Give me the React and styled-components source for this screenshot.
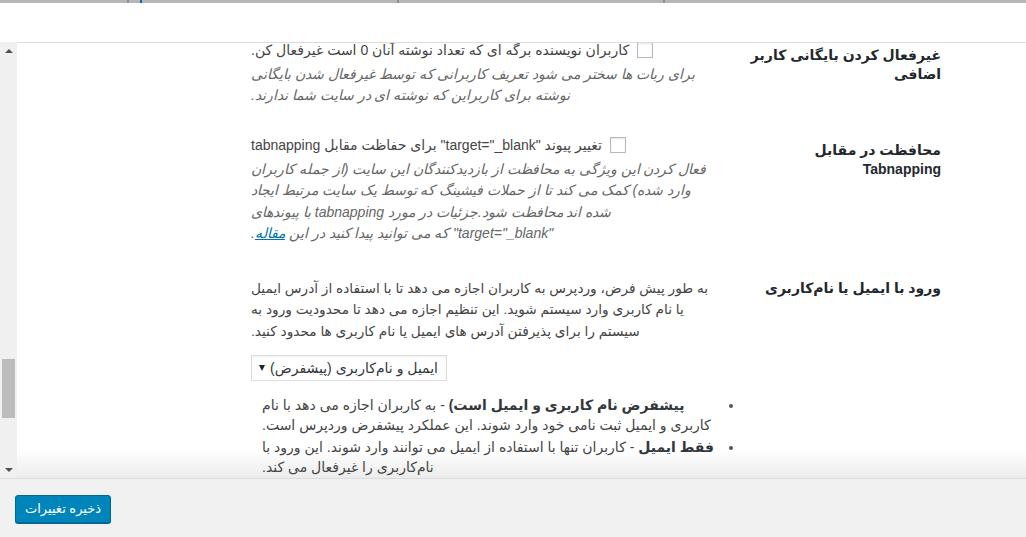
import React from "react";
import styled, { createGlobalStyle } from "styled-components";

const GlobalStyle = createGlobalStyle`
  html, body { margin: 0; padding: 0; background: #fff; }
  body { font-family: "Liberation Sans", "DejaVu Sans", sans-serif; }
  * { box-sizing: border-box; }
`;

const Page = styled.div`
  width: 1026px;
  height: 537px;
  display: flex;
  flex-direction: column;
  overflow: hidden;
  background: #fff;
`;

const TopStrip = styled.div`
  height: 3px;
  background:
    linear-gradient(#8c8f94, #8c8f94) 127px 0 / 2px 3px no-repeat,
    linear-gradient(#0073aa, #0073aa) 140px 0 / 2px 3px no-repeat,
    linear-gradient(#8c8f94, #8c8f94) 397px 0 / 2px 3px no-repeat,
    linear-gradient(#8c8f94, #8c8f94) 663px 0 / 2px 3px no-repeat,
    #b4b6b8;
`;

const HeaderSpace = styled.div`
  height: 39px;
  background: #fff;
`;

const Panel = styled.div`
  height: 437px;
  display: flex;
  border-top: 1px solid #dcdcdc;
  border-bottom: 1px solid #dcdcdc;
`;

const Scrollbar = styled.div`
  width: 17px;
  background: #f0f0f0;
  display: flex;
  flex-direction: column;
  margin-top: -1px;
`;

const ArrowButton = styled.div`
  height: 17px;
  display: flex;
  align-items: center;
  justify-content: center;
  &::after {
    content: "";
    border-left: 4px solid transparent;
    border-right: 4px solid transparent;
    ${(p) =>
      p.$down
        ? "border-top: 4px solid #505050;"
        : "border-bottom: 4px solid #505050;"}
  }
`;

const Track = styled.div`
  flex: 1;
  padding-top: 300px;
`;

const Thumb = styled.div`
  width: 13px;
  height: 59px;
  margin-left: 2px;
  background: #bcbcbc;
`;

const Content = styled.div`
  flex: 1;
  overflow: hidden;
  direction: rtl;
  background: linear-gradient(to bottom, #fff calc(100% - 28px), #ececec 100%);
`;

const Inner = styled.div`
  margin-top: -17px;
  padding-right: 85px;
`;

const Row = styled.div`
  display: grid;
  grid-template-columns: 200px 464px;
  column-gap: 26px;
  justify-content: start;
  align-items: start;
`;

const Th = styled.div`
  padding: 20px 0;
  font-size: 14px;
  font-weight: 700;
  line-height: 19px;
  color: #23282d;
  text-align: right;
`;

const Td = styled.div`
  padding: 14px 0;
  font-size: 14px;
  line-height: 21.45px;
  color: #444;
  text-align: left;
`;

const CheckRow = styled.label`
  display: flex;
  align-items: center;
  justify-content: flex-end;
  gap: 8px;
  height: 20px;
  line-height: 20px;
  color: #444;
`;

const Checkbox = styled.span`
  flex: none;
  width: 16px;
  height: 16px;
  border: 1px solid #b4b9be;
  background: #fff;
  box-shadow: inset 0 1px 2px rgba(0, 0, 0, 0.1);
`;

const Description = styled.p`
  margin: 4px 0 0;
  font-style: italic;
  color: #666;
`;

const Paragraph = styled.p`
  margin: 5px 0 0;
  font-size: 13.7px;
`;

const Link = styled.a`
  color: #0073aa;
  text-decoration: underline;
`;

const SelectBox = styled.div`
  margin: 13px auto 0 0;
  width: 196px;
  height: 26px;
  display: flex;
  align-items: center;
  justify-content: space-between;
  padding: 0 8px 0 7px;
  border: 1px solid #ddd;
  background: #fff;
  box-shadow: inset 0 1px 2px rgba(0, 0, 0, 0.07);
  color: #32373c;
  font-size: 14px;
  line-height: 20px;
  white-space: nowrap;
`;

const Caret = styled.span`
  flex: none;
  width: 0;
  height: 0;
  border-left: 3.5px solid transparent;
  border-right: 3.5px solid transparent;
  border-top: 6px solid #222;
`;

const List = styled.ul`
  margin: 15px -3px 0 0;
  padding: 0 0 0 11px;
  list-style: disc outside;
`;

const Item = styled.li`
  line-height: 19.5px;
  margin-bottom: 3px;
  color: #444;
  &::marker {
    color: #555;
  }
  b {
    color: #32373c;
  }
`;

const BottomBar = styled.div`
  flex: 1;
  background: #f1f1f1;
  padding: 16px 15px 0;
  display: flex;
  align-items: flex-start;
`;

const Button = styled.button`
  height: 28px;
  padding: 0 9px;
  border: 1px solid #006799;
  border-radius: 3px;
  background: #0085ba;
  box-shadow: 0 1px 0 #006799;
  color: #fff;
  font-family: "Liberation Sans", "DejaVu Sans", sans-serif;
  font-size: 13px;
  line-height: 26px;
  white-space: nowrap;
  direction: rtl;
  cursor: pointer;
`;

export default function App() {
  return (
    <>
      <GlobalStyle />
      <Page>
        <TopStrip />
        <HeaderSpace />
        <Panel>
          <Scrollbar>
            <ArrowButton />
            <Track>
              <Thumb />
            </Track>
            <ArrowButton $down />
          </Scrollbar>
          <Content>
            <Inner>
              <Row>
                <Th>غیرفعال کردن بایگانی کاربر اضافی</Th>
                <Td>
                  <CheckRow>
                    <Checkbox />
                    <span>کاربران نویسنده برگه ای که تعداد نوشته آنان 0 است غیرفعال کن.</span>
                  </CheckRow>
                  <Description>
                    برای ربات ها سختر می شود تعریف کاربرانی که توسط غیرفعال شدن بایگانی نوشته برای کاربراین که نوشته ای در سایت شما ندارند.
                  </Description>
                </Td>
              </Row>
              <Row>
                <Th>محافظت در مقابل Tabnapping</Th>
                <Td>
                  <CheckRow>
                    <Checkbox />
                    <span>تغییر پیوند "target="_blank" برای حفاظت مقابل tabnapping</span>
                  </CheckRow>
                  <Description>
                    فعال کردن این ویژگی به محافظت از بازدیدکنندگان این سایت (از جمله کاربران وارد شده) کمک می کند تا از حملات فیشینگ که توسط یک سایت مرتبط ایجاد شده اند محافظت شود.جزئیات در مورد tabnapping با پیوندهای "target="_blank" که می توانید پیدا کنید در این <Link href="#">مقاله</Link>.
                  </Description>
                </Td>
              </Row>
              <Row>
                <Th>ورود با ایمیل یا نام‌کاربری</Th>
                <Td>
                  <Paragraph>
                    به طور پیش فرض، وردپرس به کاربران اجازه می دهد تا با استفاده از آدرس ایمیل یا نام کاربری وارد سیستم شوید. این تنظیم اجازه می دهد تا محدودیت ورود به سیستم را برای پذیرفتن آدرس های ایمیل یا نام کاربری ها محدود کنید.
                  </Paragraph>
                  <SelectBox>
                    <span>ایمیل و نام‌کاربری (پیشفرض)</span>
                    <Caret />
                  </SelectBox>
                  <List>
                    <Item>
                      <b>پیشفرض نام کاربری و ایمیل است)</b> - به کاربران اجازه می دهد با نام کاربری و ایمیل ثبت نامی خود وارد شوند. این عملکرد پیشفرض وردپرس است.
                    </Item>
                    <Item>
                      <b>فقط ایمیل</b> - کاربران تنها با استفاده از ایمیل می توانند وارد شوند. این ورود با نام‌کاربری را غیرفعال می کند.
                    </Item>
                  </List>
                </Td>
              </Row>
            </Inner>
          </Content>
        </Panel>
        <BottomBar>
          <Button>ذخیره تغییرات</Button>
        </BottomBar>
      </Page>
    </>
  );
}
